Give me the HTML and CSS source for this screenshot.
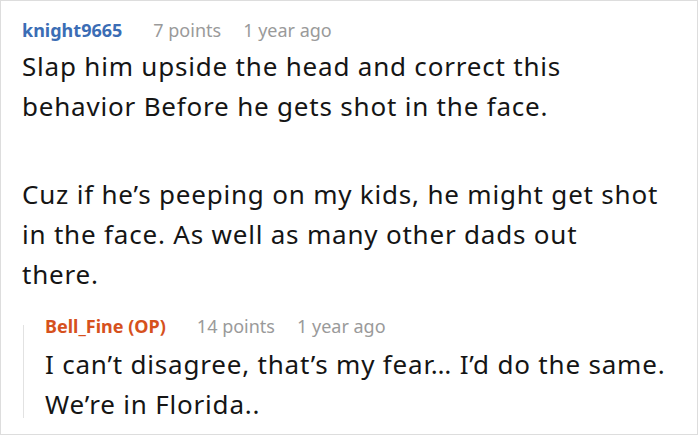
FILE: index.html
```html
<!DOCTYPE html>
<html>
<head>
<meta charset="utf-8">
<link rel="stylesheet" href="styles.css">
</head>
<body>
<div class="card">
  <div class="comment">
    <div class="meta">
      <span class="user">knight9665</span>
      <span class="info">7 points</span>
      <span class="info">1 year ago</span>
    </div>
    <div class="body main">
      <p>Slap him upside the head and correct this<br>behavior Before he gets shot in the face.</p>
      <p>Cuz if he’s peeping on my kids, he might get shot<br>in the face. As well as many other dads out<br>there.</p>
    </div>
    <div class="reply">
      <div class="rail"></div>
      <div class="reply-content">
        <div class="meta">
          <span class="user op">Bell_Fine (OP)</span>
          <span class="info">14 points</span>
          <span class="info">1 year ago</span>
        </div>
        <div class="body sub">
          <p>I can’t disagree, that’s my fear… I’d do the same.<br>We’re in Florida..</p>
        </div>
      </div>
    </div>
  </div>
</div>
</body>
</html>
```
FILE: styles.css
```css
html, body {
  margin: 0;
  padding: 0;
  background: #fff;
}
.card {
  width: 698px;
  height: 435px;
  box-sizing: border-box;
  border: 1px solid #dddddd;
  font-family: "Noto Sans", sans-serif;
  overflow: hidden;
}
.comment {
  padding: 17px 10px 0 21px;
}
.meta {
  display: flex;
  font-size: 18px;
  line-height: 24px;
  color: #9a9a9a;
  white-space: nowrap;
}
.user {
  font-weight: bold;
  color: #3b6db5;
  margin-right: 31px;
}
.user.op {
  color: #d6511d;
}
.info {
  margin-right: 22px;
}
.body {
  color: #151515;
  font-size: 26px;
  line-height: 40px;
  letter-spacing: 0.8px;
  white-space: nowrap;
}
.body p {
  margin: 0;
}
.main {
  margin-top: 4px;
}
.main p + p {
  margin-top: 48px;
}
.reply {
  display: flex;
  margin-top: 20px;
}
.rail {
  width: 1px;
  background: #e2e2e2;
  margin: 11px 0 6px 1px;
  flex: none;
}
.reply-content {
  padding-left: 21px;
}
.sub {
  margin-top: 6px;
}
```
